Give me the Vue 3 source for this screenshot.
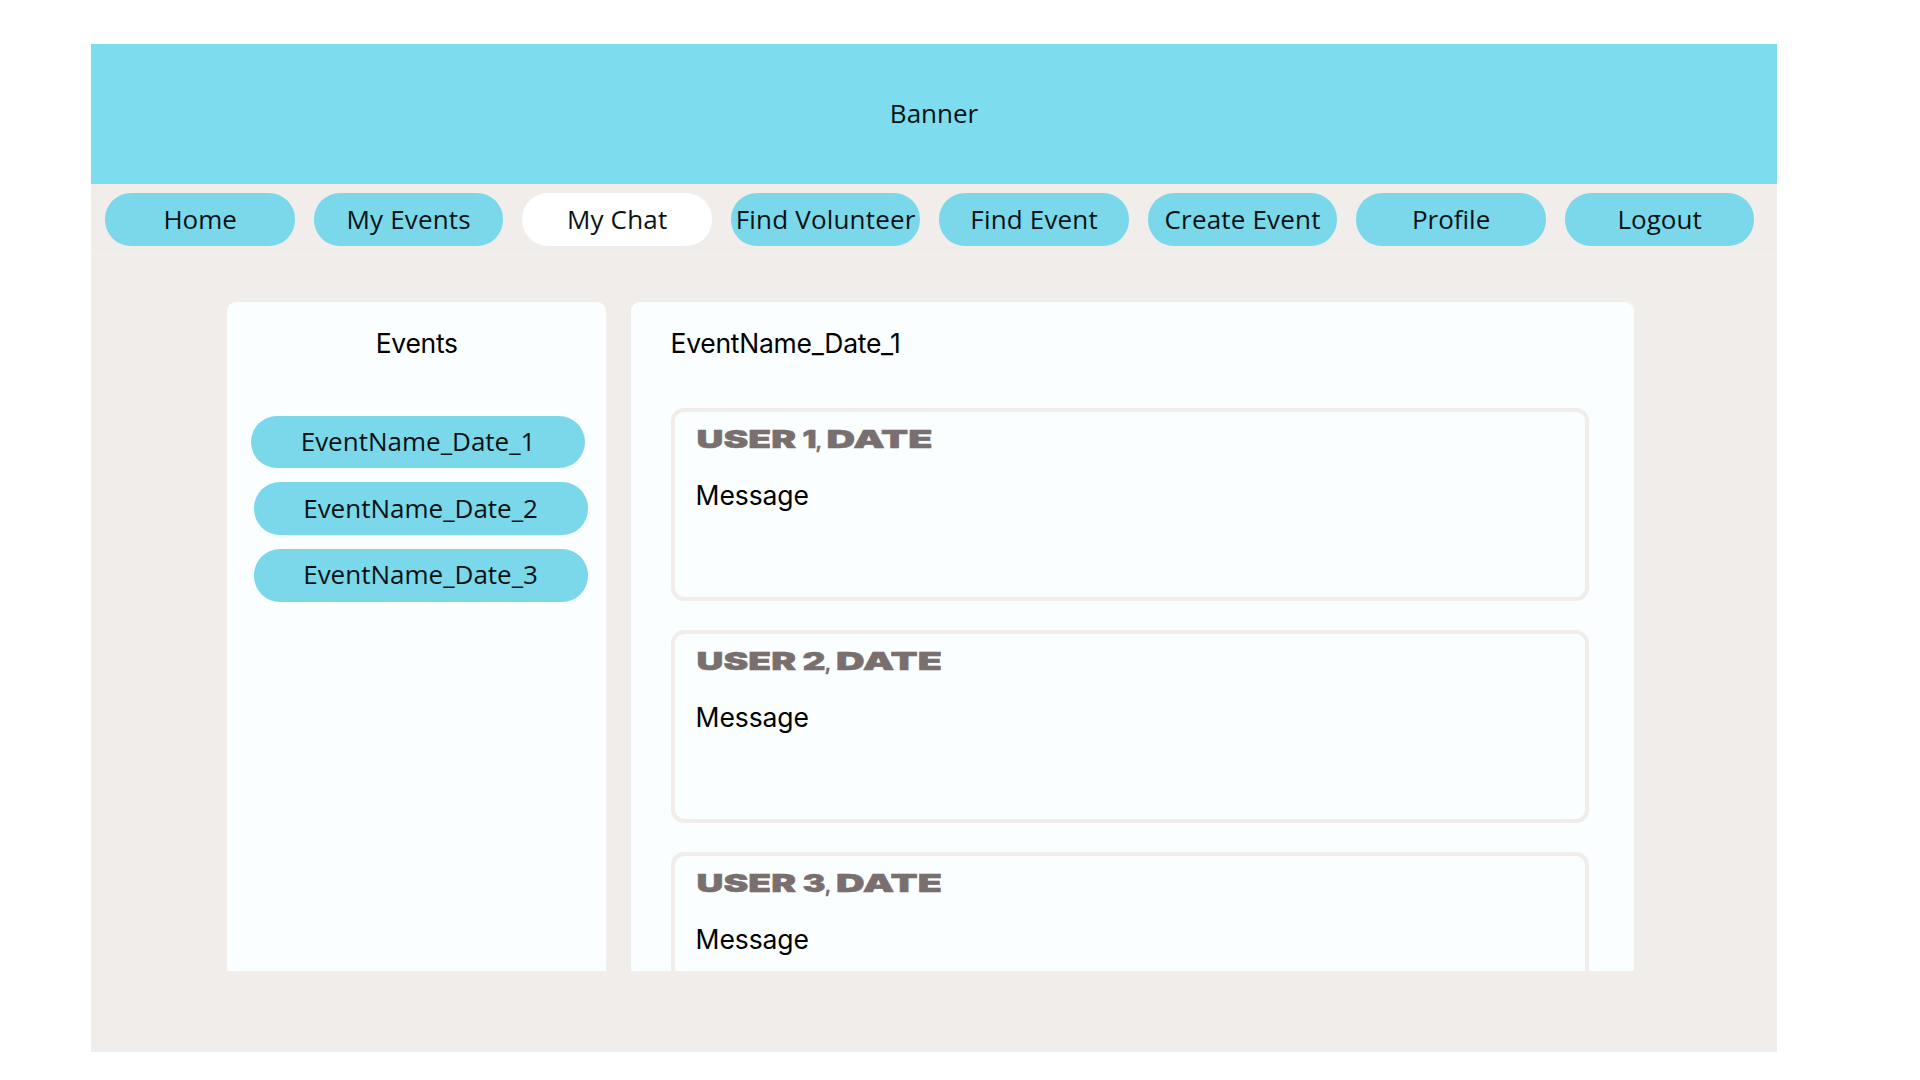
<script setup>
const navItems = ['Home', 'My Events', 'My Chat', 'Find Volunteer', 'Find Event', 'Create Event', 'Profile', 'Logout']
const active = 'My Chat'
const events = ['EventName_Date_1', 'EventName_Date_2', 'EventName_Date_3']
const messages = [
  { num: '1', numWidth: 14, comma: 119.5, date: 130.5 },
  { num: '2', numWidth: 23, comma: 128.7, date: 140 },
  { num: '3', numWidth: 23, comma: 128.7, date: 140 },
]
</script>

<template>
  <div class="page">
    <header class="banner"><span class="label">Banner</span></header>
    <nav class="nav">
      <a v-for="item in navItems" :key="item" class="pill" :class="{ active: item === active }">
        <span class="label" :class="{ spaced: item.includes(' ') }">{{ item }}</span>
      </a>
    </nav>
    <main class="content">
      <aside class="panel events">
        <h2 class="title">Events</h2>
        <a v-for="event in events" :key="event" class="pill event"><span class="label">{{ event }}</span></a>
      </aside>
      <section class="panel chat">
        <h2 class="title">EventName_Date_1</h2>
        <article v-for="m in messages" :key="m.num" class="card">
          <svg class="author" width="270" height="30">
            <text y="21.5">
              <tspan x="0.6" textLength="99.5" lengthAdjust="spacingAndGlyphs">USER</tspan>
              <tspan x="106.5" :textLength="m.numWidth" lengthAdjust="spacingAndGlyphs">{{ m.num }}</tspan>
              <tspan :x="m.comma" class="comma">,</tspan>
              <tspan :x="m.date" textLength="106" lengthAdjust="spacingAndGlyphs">DATE</tspan>
            </text>
          </svg>
          <p class="body">Message</p>
        </article>
      </section>
    </main>
  </div>
</template>

<style>
body {
  background: #fff;
  overflow: hidden;
}
</style>

<style scoped>
.page {
  width: 1685.3px;
  height: 1007.6px;
  margin: 44.4px 0 0 91.4px;
  background: #f1edea;
  display: flex;
  flex-direction: column;
  font-family: "Open Sans", sans-serif;
  font-size: 26px;
  color: #0b1214;
}
.banner {
  height: 139.6px;
  flex: none;
  display: flex;
  align-items: center;
  justify-content: center;
  background: #7dddee;
}
.label {
  padding-bottom: 2px;
}
.spaced {
  letter-spacing: 0.18px;
}
.nav {
  height: 72px;
  flex: none;
  display: flex;
  gap: 19.1px;
  box-sizing: border-box;
  padding: 9.4px 0 0 14.1px;
  border-bottom: 1px solid #f3f0ed;
}
.pill {
  width: 189.4px;
  height: 52.6px;
  flex: none;
  display: flex;
  align-items: center;
  justify-content: center;
  white-space: nowrap;
  border-radius: 26px;
  background: #7ad8ea;
}
.pill.active {
  background: #fff;
}
.content {
  display: flex;
  gap: 25px;
  height: 669px;
  margin: 45.6px 0 0 135.9px;
}
.panel {
  box-sizing: border-box;
  background: #fafefe;
  border-radius: 9px 9px 0 0;
  overflow: hidden;
  display: flex;
  flex-direction: column;
}
.title {
  margin: 0;
  font: 400 26.5px/34px Inter, sans-serif;
  letter-spacing: -0.28px;
  color: #000;
}
.events {
  width: 379px;
  padding-top: 24px;
}
.events .title {
  text-align: center;
  margin-bottom: 56px;
}
.event {
  width: 334px;
  margin: 0 0 14.1px 26.3px;
}
.event:nth-of-type(1) {
  margin-left: 23.8px;
}
.chat {
  width: 1002.6px;
  padding: 24px 0 0 39.3px;
}
.chat .title {
  margin-bottom: 48.8px;
}
.card {
  width: 918px;
  height: 193px;
  flex: none;
  box-sizing: border-box;
  border: 4px solid #f1edea;
  border-radius: 13px;
  margin-bottom: 28.9px;
  padding: 13.8px 0 0 21px;
}
.author {
  display: block;
  overflow: visible;
  font: 900 24.5px Inter, sans-serif;
  fill: #786f6e;
  stroke: #786f6e;
  stroke-width: 0.5px;
}
.comma {
  font-weight: 600;
  font-size: 20px;
}
.body {
  margin: 22px 0 0;
  font: 400 26.5px/34px Inter, sans-serif;
  letter-spacing: -0.1px;
  color: #000;
}
</style>
